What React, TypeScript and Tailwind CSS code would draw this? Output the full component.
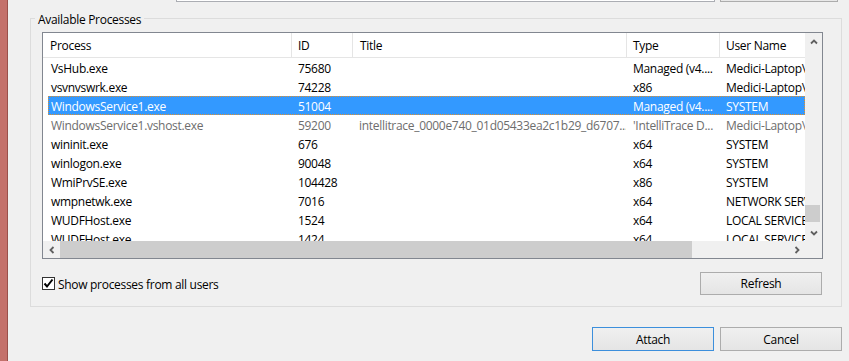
import React from "react";

type Row = { p: string; id: string; t: string; ty: string; u: string; sel?: boolean; dim?: boolean };

const rows: Row[] = [
  { p: "VsHub.exe", id: "75680", t: "", ty: "Managed (v4....", u: "Medici-Laptop\\Medici" },
  { p: "vsvnvswrk.exe", id: "74228", t: "", ty: "x86", u: "Medici-Laptop\\Medici" },
  { p: "WindowsService1.exe", id: "51004", t: "", ty: "Managed (v4....", u: "SYSTEM", sel: true },
  {
    p: "WindowsService1.vshost.exe",
    id: "59200",
    t: "intellitrace_0000e740_01d05433ea2c1b29_d6707...",
    ty: "'IntelliTrace D...",
    u: "Medici-Laptop\\Medici",
    dim: true,
  },
  { p: "wininit.exe", id: "676", t: "", ty: "x64", u: "SYSTEM" },
  { p: "winlogon.exe", id: "90048", t: "", ty: "x64", u: "SYSTEM" },
  { p: "WmiPrvSE.exe", id: "104428", t: "", ty: "x86", u: "SYSTEM" },
  { p: "wmpnetwk.exe", id: "7016", t: "", ty: "x64", u: "NETWORK SERVICE" },
  { p: "WUDFHost.exe", id: "1524", t: "", ty: "x64", u: "LOCAL SERVICE" },
  { p: "WUDFHost.exe", id: "1424", t: "", ty: "x64", u: "LOCAL SERVICE" },
];

function Chevron({ dir }: { dir: "up" | "down" | "left" | "right" }) {
  const pts: Record<string, string> = {
    up: "1,5.5 4,2.5 7,5.5",
    down: "1,2.5 4,5.5 7,2.5",
    left: "5.5,1 2.5,4 5.5,7",
    right: "2.5,1 5.5,4 2.5,7",
  };
  return (
    <svg width="8" height="8" viewBox="0 0 8 8">
      <polyline points={pts[dir]} fill="none" stroke="#606060" strokeWidth="1.8" />
    </svg>
  );
}

function Button({ label, focused }: { label: string; focused?: boolean }) {
  return (
    <div
      className={
        "w-[122px] h-[24px] flex items-center justify-center pt-[1px] border bg-gradient-to-b from-[#f0f0f0] to-[#e5e5e5] text-[12px] text-black " +
        (focused ? "border-[#3c8fdc]" : "border-[#acacac]")
      }
    >
      {label}
    </div>
  );
}

export default function App() {
  return (
    <div
      className="w-[849px] h-[361px] bg-[#f0f0f0] flex overflow-hidden text-[12px] tracking-[-0.3px] text-black"
      style={{ fontFamily: '"Open Sans", "Noto Sans", sans-serif' }}
    >
      <div className="w-[8px] h-full bg-[#c4716b] border-r border-[#9a504b] shrink-0" />
      <div className="flex-1 flex flex-col">
        {/* top controls (cut off) */}
        <div className="flex h-[2px] ml-[168px]">
          <div className="w-[539px] h-[2px] border-x border-b border-[#abadb3] bg-white" />
          <div className="w-[118px] h-[2px] ml-[5px] border-x border-b border-[#acacac] bg-[#e8e8e8]" />
        </div>

        {/* group box */}
        <div className="ml-[22px] mt-[16px] w-[812px] h-[289px] border border-[#dcdcdc] flex flex-col">
          <span className="self-start -mt-[8px] ml-[4px] px-[3px] pt-[1px] bg-[#f0f0f0] leading-[16px]">
            Available Processes
          </span>

          {/* list box */}
          <div className="ml-[11px] mt-[4px] w-[781px] h-[227px] border border-[#828790] bg-white grid grid-cols-[1fr_17px] grid-rows-[1fr_17px]">
            <div className="overflow-hidden">
              {/* header */}
              <div className="flex h-[25px] border-b border-[#e5e5e5] items-center">
                <div className="w-[248px] pl-[7px] pt-[2px] h-full flex items-center shrink-0">Process</div>
                <div className="w-[61px] pl-[6px] pt-[2px] h-full flex items-center border-l border-[#e5e5e5] shrink-0">ID</div>
                <div className="w-[274px] pl-[7px] pt-[2px] h-full flex items-center border-l border-[#e5e5e5] shrink-0">Title</div>
                <div className="w-[93px] pl-[6px] pt-[2px] h-full flex items-center border-l border-[#e5e5e5] shrink-0">Type</div>
                <div className="w-[86px] pl-[6px] pt-[2px] h-full flex items-center border-l border-[#e5e5e5] shrink-0">User Name</div>
              </div>
              {/* rows */}
              {rows.map((r, i) => (
                <div
                  key={i}
                  className={
                    "flex h-[19px] items-center pt-[3px] ml-[5px] whitespace-nowrap " +
                    (r.sel
                      ? "bg-[#3399ff] text-white outline-1 outline-dotted outline-[#e0902e] -outline-offset-1"
                      : r.dim
                      ? "text-[#6d6d6d]"
                      : "text-black")
                  }
                >
                  <div className="w-[243px] pl-[3px] shrink-0 overflow-hidden">{r.p}</div>
                  <div className="w-[61px] pl-[7px] shrink-0 overflow-hidden">{r.id}</div>
                  <div className="w-[274px] pl-[7px] shrink-0 overflow-hidden">{r.t}</div>
                  <div className="w-[93px] pl-[7px] shrink-0 overflow-hidden">{r.ty}</div>
                  <div className="w-[86px] pl-[7px] shrink-0 overflow-hidden">{r.u}</div>
                </div>
              ))}
            </div>

            {/* vertical scrollbar */}
            <div className="bg-[#f0f0f0] flex flex-col">
              <div className="h-[17px] flex items-center justify-center">
                <Chevron dir="up" />
              </div>
              <div className="flex-1 flex flex-col justify-end pb-[2px]">
                <div className="h-[17px] w-[15px] bg-[#cdcdcd]" />
              </div>
              <div className="h-[17px] flex items-center justify-center">
                <Chevron dir="down" />
              </div>
            </div>

            {/* horizontal scrollbar */}
            <div className="bg-[#f0f0f0] flex items-stretch">
              <div className="w-[17px] flex items-center justify-center">
                <Chevron dir="left" />
              </div>
              <div className="flex-1 flex items-stretch">
                <div className="w-[632px] bg-[#cdcdcd]" />
              </div>
              <div className="w-[17px] flex items-center justify-center">
                <Chevron dir="right" />
              </div>
            </div>
            <div className="bg-[#f0f0f0]" />
          </div>

          {/* checkbox + refresh */}
          <div className="flex items-center justify-between mt-[13px] ml-[11px] mr-[19px]">
            <div className="flex items-center">
              <div className="w-[13px] h-[13px] border border-[#333333] bg-white flex items-center justify-center">
                <svg width="11" height="11" viewBox="0 0 11 11">
                  <polyline points="1.5,5.5 4,8.5 9.5,1.5" fill="none" stroke="#000" strokeWidth="2" />
                </svg>
              </div>
              <span className="ml-[3px] pt-[2px]">Show processes from all users</span>
            </div>
            <div className="w-[122px] h-[23px] flex items-center justify-center pt-[1px] border border-[#acacac] bg-gradient-to-b from-[#f0f0f0] to-[#e5e5e5]">
              Refresh
            </div>
          </div>
        </div>

        {/* bottom buttons */}
        <div className="flex mt-[20px] ml-[584px] gap-[6px]">
          <Button label="Attach" focused />
          <Button label="Cancel" />
        </div>
      </div>
    </div>
  );
}
